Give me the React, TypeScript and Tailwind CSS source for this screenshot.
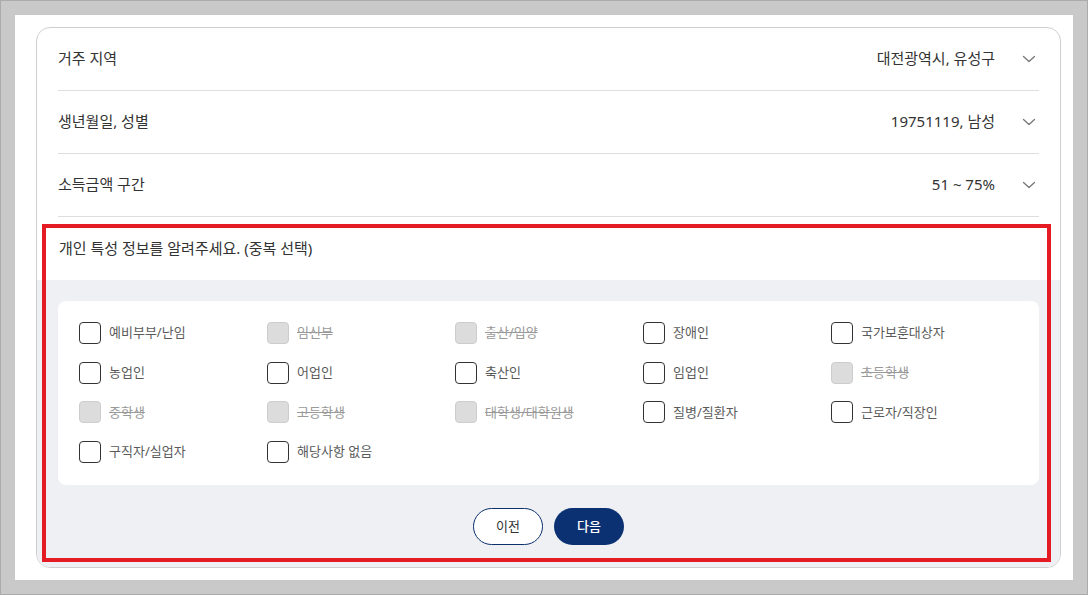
import React from 'react';

const font = { fontFamily: '"Noto Sans", "Noto Sans CJK KR", sans-serif' };

const infoRows = [
  { label: '거주 지역', value: '대전광역시, 유성구' },
  { label: '생년월일, 성별', value: '19751119, 남성' },
  { label: '소득금액 구간', value: '51 ~ 75%' },
];

const options: { label: string; disabled?: boolean }[] = [
  { label: '예비부부/난임' },
  { label: '임신부', disabled: true },
  { label: '출산/입양', disabled: true },
  { label: '장애인' },
  { label: '국가보훈대상자' },
  { label: '농업인' },
  { label: '어업인' },
  { label: '축산인' },
  { label: '임업인' },
  { label: '초등학생', disabled: true },
  { label: '중학생', disabled: true },
  { label: '고등학생', disabled: true },
  { label: '대학생/대학원생', disabled: true },
  { label: '질병/질환자' },
  { label: '근로자/직장인' },
  { label: '구직자/실업자' },
  { label: '해당사항 없음' },
];

function Chevron() {
  return (
    <svg width="14" height="14" viewBox="0 0 14 14" fill="none" className="ml-[27px]">
      <path d="M1.5 4.5 7 9.5l5.5-5" stroke="#777" strokeWidth="1.3" strokeLinecap="round" strokeLinejoin="round" />
    </svg>
  );
}

function InfoRow({ label, value }: { label: string; value: string }) {
  return (
    <div className="mx-[21px] h-[63px] flex items-center justify-between border-b border-[#dedede] pb-[1px]">
      <span className="text-[15px] text-[#333]">{label}</span>
      <div className="flex items-center pr-[3px]">
        <span className="text-[15px] text-[#333]">{value}</span>
        <Chevron />
      </div>
    </div>
  );
}

function Option({ label, disabled }: { label: string; disabled?: boolean }) {
  return (
    <label className="flex items-center gap-[8px] h-[22px]">
      <span
        className={
          disabled
            ? 'w-[22px] h-[22px] rounded-[4px] bg-[#dcdcdc] border border-[#cdcdcd] shrink-0'
            : 'w-[22px] h-[22px] rounded-[4px] bg-white border border-[#333] shrink-0'
        }
      />
      <span
        className={
          disabled
            ? 'text-[13px] text-[#999] line-through'
            : 'text-[13px] text-[#5a5a5a]'
        }
      >
        {label}
      </span>
    </label>
  );
}

export default function App() {
  return (
    <div style={font} className="w-[1088px] h-[595px] bg-[#c9c9c9] border border-[#ababab] p-[14px]">
      <div className="w-[1058px] h-[565px] bg-white pl-[21px] pt-[12px]">
        <div className="relative w-[1025px] h-[541px] border border-[#cfcfcf] rounded-[14px] overflow-hidden bg-white">
          {infoRows.map((r) => (
            <InfoRow key={r.label} label={r.label} value={r.value} />
          ))}

          <div className="h-[63px] px-[22px] flex items-center">
            <span className="text-[15px] text-[#333]">개인 특성 정보를 알려주세요. (중복 선택)</span>
          </div>

          <div className="bg-[#eff0f4] px-[21px] pt-[21px] h-[287px]">
            <div className="bg-white rounded-[8px] h-[184px] pl-[21px] pt-[21px]">
              <div className="grid grid-cols-[188px_188px_188px_188px_188px] gap-y-[17.7px]">
                {options.map((o) => (
                  <Option key={o.label} label={o.label} disabled={o.disabled} />
                ))}
              </div>
            </div>
            <div className="flex justify-center gap-[11px] pt-[23px]">
              <button className="w-[70px] h-[37px] rounded-full border border-[#0b2f6b] bg-white text-[13px] text-[#333]">
                이전
              </button>
              <button className="w-[70px] h-[37px] rounded-full bg-[#0b3173] text-[13px] font-medium text-white">
                다음
              </button>
            </div>
          </div>

          <div className="absolute left-[5px] top-[196px] right-[9px] bottom-[5px] border-4 border-[#e51b24] pointer-events-none" />
        </div>
      </div>
    </div>
  );
}
